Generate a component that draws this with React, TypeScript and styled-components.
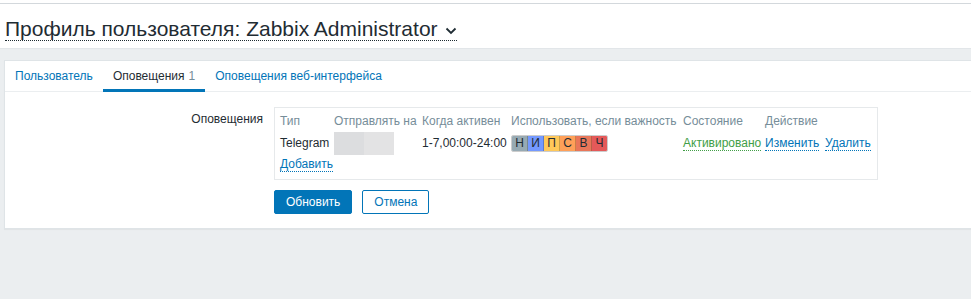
import React from "react";
import styled, { createGlobalStyle } from "styled-components";

const Global = createGlobalStyle`
  html, body { margin: 0; padding: 0; }
  body {
    background: #ebeef0;
    font-family: "Liberation Sans", Arial, sans-serif;
    font-size: 12px;
    color: #1f2c33;
    height: 299px;
    overflow: hidden;
  }
`;

const TopRule = styled.div`
  height: 3px;
  background: #ffffff;
  border-bottom: 1px solid #d3d8dc;
`;

const Header = styled.header`
  background: #ffffff;
  height: 44px;
  border-bottom: 1px solid #e2e6e9;
  display: flex;
  align-items: flex-start;
  padding: 0 5px;
`;

const Title = styled.h1`
  margin: 14px 0 0 0;
  font-weight: normal;
  font-size: 21px;
  line-height: 21px;
  color: #1f2c33;
  display: inline-flex;
  align-items: center;
  gap: 7px;
  padding-bottom: 1px;
  border-bottom: 1px dotted #1f2c33;
`;

const Chevron = styled.svg`
  width: 12px;
  height: 8px;
  margin-top: 4px;
`;

const Gap = styled.div`
  height: 11px;
`;

const Panel = styled.section`
  margin-left: 4px;
  background: #ffffff;
  border: 1px solid #dfe4e7;
  border-right: none;
  height: 167px;
  box-shadow: 0 1px 1px rgba(0,0,0,0.04);
`;

const Tabs = styled.nav`
  display: flex;
  height: 30px;
  border-bottom: 1px solid #ebeef0;
`;

const Tab = styled.div<{ $active?: boolean }>`
  padding: 0 10px;
  display: flex;
  align-items: center;
  color: ${(p) => (p.$active ? "#1f2c33" : "#0275b8")};
  border-bottom: 3px solid ${(p) => (p.$active ? "#0275b8" : "transparent")};
  margin-bottom: -1px;
  padding-top: 1px;
`;

const Count = styled.span`
  color: #768d99;
  margin-left: 4px;
`;

const Body = styled.div`
  padding-top: 15px;
`;

const FormRow = styled.div`
  display: flex;
  align-items: flex-start;
`;

const Label = styled.div`
  width: 258px;
  text-align: right;
  padding-right: 11px;
  padding-top: 5px;
  flex-shrink: 0;
`;

const Box = styled.div`
  width: 592px;
  border: 1px solid #e6e9eb;
  padding: 3px 5px 5px 5px;
`;

const Grid = styled.div`
  display: grid;
  grid-template-columns: 54px 88px 89px 172px 82px 60px auto;
  align-items: center;
`;

const Th = styled.div`
  color: #768d99;
  height: 20px;
  display: flex;
  align-items: center;
  white-space: nowrap;
`;

const Td = styled.div`
  height: 24px;
  display: flex;
  align-items: center;
  white-space: nowrap;
`;

const Redacted = styled.div`
  width: 60px;
  height: 23px;
  background: linear-gradient(to right, #dcdddf 0 30px, #e3e3e4 30px 60px);
`;

const Severities = styled.div`
  display: flex;
  border: 1px solid rgba(0, 0, 0, 0.2);
  border-radius: 2px;
  overflow: hidden;
`;

const Sev = styled.span<{ $bg: string }>`
  background: ${(p) => p.$bg};
  width: 15px;
  height: 15px;
  line-height: 15px;
  text-align: center;
  color: #1f2c33;
  border-right: 1px solid rgba(0, 0, 0, 0.2);
  &:last-child { border-right: none; }
`;

const Link = styled.a<{ $color?: string }>`
  color: ${(p) => p.$color || "#0275b8"};
  text-decoration: none;
  border-bottom: 1px dotted ${(p) => p.$color || "#0275b8"};
  line-height: 14px;
`;

const AddRow = styled.div`
  padding-top: 2px;
  height: 17px;
`;

const Buttons = styled.div`
  display: flex;
  gap: 10px;
  padding: 10px 0 0 269px;
`;

const Button = styled.button<{ $primary?: boolean }>`
  font-family: "Liberation Sans", Arial, sans-serif;
  font-size: 12px;
  height: 24px;
  padding: 0 11px;
  border-radius: 2px;
  cursor: pointer;
  background: ${(p) => (p.$primary ? "#0275b8" : "#ffffff")};
  color: ${(p) => (p.$primary ? "#ffffff" : "#0275b8")};
  border: 1px solid #0275b8;
`;

const severities = [
  { l: "Н", c: "#97aab3" },
  { l: "И", c: "#7499ff" },
  { l: "П", c: "#ffc859" },
  { l: "С", c: "#ffa059" },
  { l: "В", c: "#e97659" },
  { l: "Ч", c: "#e45959" },
];

export default function App() {
  return (
    <>
      <Global />
      <TopRule />
      <Header>
        <Title>
          Профиль пользователя: Zabbix Administrator
          <Chevron viewBox="0 0 12 8">
            <path d="M1.5 1.5 L6 6 L10.5 1.5" fill="none" stroke="#1f2c33" strokeWidth="1.8" />
          </Chevron>
        </Title>
      </Header>
      <Gap />
      <Panel>
        <Tabs>
          <Tab>Пользователь</Tab>
          <Tab $active>
            Оповещения<Count>1</Count>
          </Tab>
          <Tab>Оповещения веб-интерфейса</Tab>
        </Tabs>
        <Body>
          <FormRow>
            <Label>Оповещения</Label>
            <Box>
              <Grid>
                <Th>Тип</Th>
                <Th>Отправлять на</Th>
                <Th>Когда активен</Th>
                <Th>Использовать, если важность</Th>
                <Th>Состояние</Th>
                <Th>Действие</Th>
                <Th />
                <Td>Telegram</Td>
                <Td>
                  <Redacted />
                </Td>
                <Td>1-7,00:00-24:00</Td>
                <Td>
                  <Severities>
                    {severities.map((s) => (
                      <Sev key={s.l} $bg={s.c}>
                        {s.l}
                      </Sev>
                    ))}
                  </Severities>
                </Td>
                <Td>
                  <Link $color="#429e47">Активировано</Link>
                </Td>
                <Td>
                  <Link>Изменить</Link>
                </Td>
                <Td>
                  <Link>Удалить</Link>
                </Td>
              </Grid>
              <AddRow>
                <Link>Добавить</Link>
              </AddRow>
            </Box>
          </FormRow>
          <Buttons>
            <Button $primary>Обновить</Button>
            <Button>Отмена</Button>
          </Buttons>
        </Body>
      </Panel>
    </>
  );
}
